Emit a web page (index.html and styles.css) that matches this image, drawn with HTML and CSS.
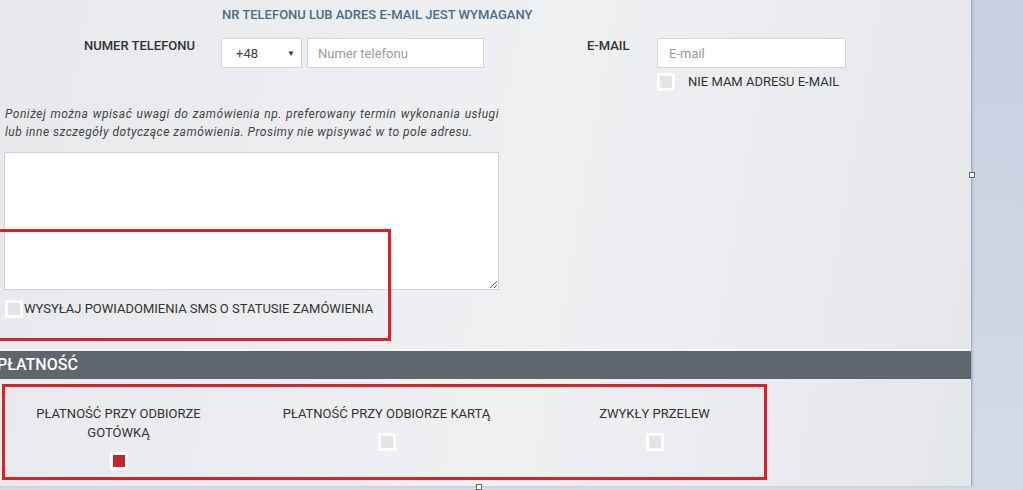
FILE: index.html
```html
<!DOCTYPE html>
<html lang="pl">

<head>
    <meta charset="UTF-8">
    <title>Zamówienie - kontakt i płatność</title>
    <link rel="stylesheet" href="styles.css">
</head>

<body>
    <div class="page">
        <p class="notice">NR TELEFONU LUB ADRES E-MAIL JEST WYMAGANY</p>

        <div class="contact-row">
            <label class="field-label phone-label" for="telefon">NUMER TELEFONU</label>
            <div class="phone-group">
                <div class="select">
                    <span>+48</span>
                    <span class="arrow">&#9660;</span>
                </div>
                <input type="text" id="telefon" class="phone-input" placeholder="Numer telefonu">
            </div>

            <label class="field-label email-label" for="email">E-MAIL</label>
            <div class="email-group">
                <input type="text" id="email" class="email-input" placeholder="E-mail">
                <div class="check-row">
                    <span class="checkbox"></span>
                    <span class="check-text">NIE MAM ADRESU E-MAIL</span>
                </div>
            </div>
        </div>

        <p class="note">Poniżej można wpisać uwagi do zamówienia np. preferowany termin wykonania usługi lub inne szczegóły dotyczące zamówienia. Prosimy nie wpisywać w to pole adresu.</p>

        <textarea class="uwagi"></textarea>

        <div class="sms-row">
            <span class="checkbox"></span>
            <span class="check-text">WYSYŁAJ POWIADOMIENIA SMS O STATUSIE ZAMÓWIENIA</span>
        </div>

        <div class="section-bar">
            <h2>PŁATNOŚĆ</h2>
        </div>

        <div class="payment">
            <div class="option">
                <span>PŁATNOŚĆ PRZY ODBIORZE GOTÓWKĄ</span>
                <span class="checkbox checked"></span>
            </div>
            <div class="option">
                <span>PŁATNOŚĆ PRZY ODBIORZE KARTĄ</span>
                <span class="checkbox"></span>
            </div>
            <div class="option">
                <span>ZWYKŁY PRZELEW</span>
                <span class="checkbox"></span>
            </div>
        </div>

        <div class="mark"></div>
        <span class="handle handle-side"></span>
        <span class="handle handle-bottom"></span>
    </div>
</body>

</html>
```

FILE: styles.css
```css
* {
    box-sizing: border-box;
    margin: 0;
    padding: 0;
}

body {
    width: 1023px;
    height: 490px;
    overflow: hidden;
    background: linear-gradient(#c6d0e1, #d3dbe7);
    font-family: Roboto, "Liberation Sans", sans-serif;
    font-size: 13px;
    color: #333;
}

.page {
    position: relative;
    width: 972px;
    height: 486px;
    background: linear-gradient(100deg, #e7e9ec 0%, #eff0f2 55%, #e4e7ea 100%);
    border-right: 1px solid #a9afb8;
    box-shadow: 1px 0 2px rgba(120, 130, 150, 0.3);
}

.notice {
    padding: 7px 0 0 222px;
    line-height: 15px;
    font-weight: 500;
    color: #4d6c86;
}

.contact-row {
    display: flex;
    align-items: flex-start;
    margin-top: 16px;
    padding-left: 84px;
}

.field-label {
    line-height: 16px;
    font-weight: 500;
    color: #333;
}

.phone-label {
    width: 137px;
}

.email-label {
    width: 70px;
    margin-left: 103px;
}

.phone-group {
    display: flex;
    gap: 5px;
}

.select,
.phone-input,
.email-input {
    height: 30px;
    background-color: #fff;
    border: 1px solid #d3d6da;
    font-family: inherit;
    font-size: 13px;
}

.select {
    width: 81px;
    display: flex;
    justify-content: space-between;
    align-items: center;
    padding: 0 6px 0 14px;
    color: #444;
}

.select .arrow {
    font-size: 8px;
    color: #333;
}

.phone-input {
    width: 177px;
    padding-left: 10px;
}

.email-input {
    width: 189px;
    padding-left: 11px;
}

input::placeholder {
    color: #9a9a9a;
}

.email-group {
    display: flex;
    flex-direction: column;
}

.check-row {
    display: flex;
    align-items: center;
    gap: 13px;
    margin-top: 5px;
}

.checkbox {
    display: inline-block;
    width: 18px;
    height: 18px;
    border: 3px solid #fff;
    background-color: #e2e4e7;
}

.checkbox.checked {
    background-color: #c1272d;
}

.check-text {
    line-height: 18px;
    color: #333;
}

.note {
    width: 499px;
    margin-top: 14px;
    padding-left: 5px;
    font-style: italic;
    font-size: 12px;
    letter-spacing: 0.5px;
    line-height: 18px;
    text-align: justify;
    color: #444;
}

.uwagi {
    display: block;
    width: 495px;
    height: 138px;
    margin: 11px 0 0 4px;
    border: 1px solid #d0d3d7;
    background-color: #fff;
}

.sms-row {
    display: flex;
    align-items: center;
    gap: 1px;
    margin: 10px 0 0 5px;
}

.section-bar {
    margin-top: 31px;
    height: 30px;
    border-top: 2px solid #f4f5f6;
    background-color: #5f666d;
}

.section-bar h2 {
    font-size: 16px;
    font-weight: 500;
    line-height: 28px;
    color: #fff;
    text-indent: -3px;
}

.payment {
    display: grid;
    grid-template-columns: repeat(3, 219px);
    column-gap: 49px;
    width: 765px;
    height: 96px;
    margin: 5px 0 0 2px;
    padding: 17px 0 0 4px;
    border: 3px solid #d8222a;
}

.option {
    display: flex;
    flex-direction: column;
    align-items: center;
    gap: 10px;
    text-align: center;
    line-height: 19px;
    color: #333;
}

/* red annotation drawn over the form */
.mark {
    position: absolute;
    left: -10px;
    top: 229px;
    width: 401px;
    height: 112px;
    border: 3px solid #d8222a;
}

.handle {
    position: absolute;
    width: 6px;
    height: 6px;
    background-color: #fff;
    border: 1px solid #666;
}

.handle-side {
    right: -4px;
    top: 172px;
}

.handle-bottom {
    left: 476px;
    bottom: -4px;
}
```
